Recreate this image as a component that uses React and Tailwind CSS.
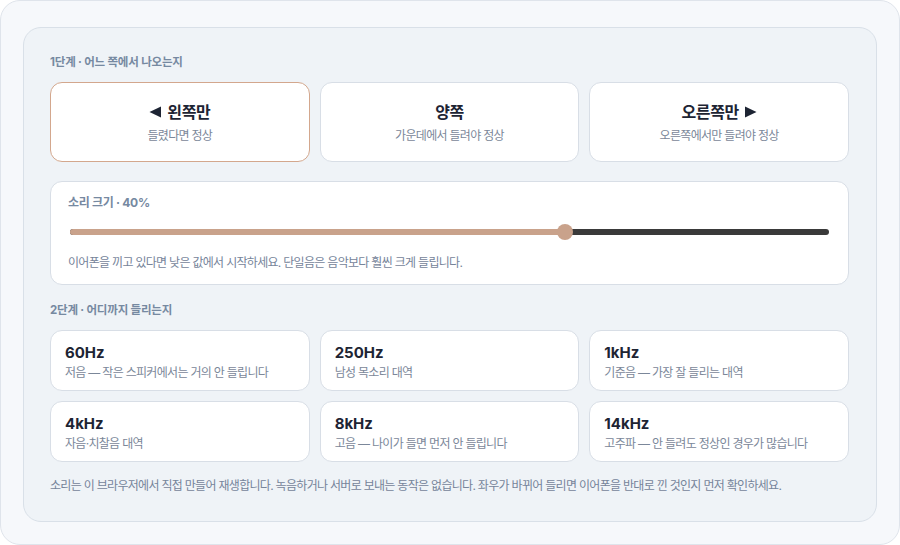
import React from "react";

const sides = [
  { title: "왼쪽만", arrow: "left", sub: "들렸다면 정상", active: true },
  { title: "양쪽", sub: "가운데에서 들려야 정상" },
  { title: "오른쪽만", arrow: "right", sub: "오른쪽에서만 들려야 정상" },
];

const bands = [
  { hz: "60Hz", sub: "저음 — 작은 스피커에서는 거의 안 들립니다" },
  { hz: "250Hz", sub: "남성 목소리 대역" },
  { hz: "1kHz", sub: "기준음 — 가장 잘 들리는 대역" },
  { hz: "4kHz", sub: "자음·치찰음 대역" },
  { hz: "8kHz", sub: "고음 — 나이가 들면 먼저 안 들립니다" },
  { hz: "14kHz", sub: "고주파 — 안 들려도 정상인 경우가 많습니다" },
];

const font = { fontFamily: 'Inter, "Noto Sans CJK KR", sans-serif' };

function Arrow({ dir }) {
  return (
    <svg width="12" height="12" viewBox="0 0 12 12" className="shrink-0">
      {dir === "left" ? (
        <path d="M12 0.5 L12 11.5 L0.5 6 Z" fill="#1d2433" />
      ) : (
        <path d="M0 0.5 L0 11.5 L11.5 6 Z" fill="#1d2433" />
      )}
    </svg>
  );
}

export default function App() {
  const pos = 65.2;
  return (
    <div
      className="w-[900px] h-[545px] rounded-[20px] border border-[#dfe4eb] bg-[#f6f8fb] px-[22px] pt-[26px]"
      style={font}
    >
      <div className="h-[495px] rounded-[18px] border border-[#d9e0e8] bg-[#eff3f7] pl-[26px] pr-[27px] pt-[26px]">
        <div className="text-[11.5px] leading-[16px] font-bold tracking-[-0.2px] text-[#7689a1]">1단계 · 어느 쪽에서 나오는지</div>

        <div className="mt-[12px] grid grid-cols-3 gap-[10px]">
          {sides.map((s) => (
            <div
              key={s.title}
              className={
                s.active
                  ? "h-[80px] rounded-[12px] border border-[#d3a78d] bg-white flex flex-col items-center justify-center"
                  : "h-[80px] rounded-[12px] border border-[#d8dee6] bg-white flex flex-col items-center justify-center"
              }
            >
              <div className="flex items-center gap-[6px] text-[16px] leading-[22px] font-bold tracking-[-0.4px] text-[#1d2433]">
                {s.arrow === "left" && <Arrow dir="left" />}
                <span>{s.title}</span>
                {s.arrow === "right" && <Arrow dir="right" />}
              </div>
              <div className="mt-[5px] text-[12px] leading-[16px] tracking-[-0.7px] text-[#7b8799]">{s.sub}</div>
            </div>
          ))}
        </div>

        <div className="mt-[19px] h-[104px] rounded-[12px] border border-[#d8dee6] bg-white pl-[17px] pr-[19px] pt-[13px]">
          <div className="text-[12px] leading-[16px] font-bold tracking-[-0.3px] text-[#7689a1]">소리 크기 · 40%</div>
          <div className="relative ml-[2px] mt-[17px] h-[8px] flex items-center">
            <div className="h-[6px] w-full rounded-full bg-[#3a3a3a]" />
            <div
              className="absolute left-0 top-[1px] h-[6px] rounded-full bg-[#c9a28b]"
              style={{ width: pos + "%" }}
            />
            <div
              className="absolute top-[-4px] h-[16px] w-[16px] -ml-[8px] rounded-full bg-[#c9a28b]"
              style={{ left: pos + "%" }}
            />
          </div>
          <div className="mt-[19px] text-[12px] leading-[16px] tracking-[-0.7px] text-[#76849a]">
            이어폰을 끼고 있다면 낮은 값에서 시작하세요. 단일음은 음악보다 훨씬 크게 들립니다.
          </div>
        </div>

        <div className="mt-[17px] text-[11.5px] leading-[16px] font-bold tracking-[-0.2px] text-[#7689a1]">2단계 · 어디까지 들리는지</div>

        <div className="mt-[12px] grid grid-cols-3 gap-[10px]">
          {bands.map((b) => (
            <div
              key={b.hz}
              className="h-[61px] rounded-[12px] border border-[#d8dee6] bg-white px-[14px] pt-[12px]"
            >
              <div className="text-[15px] leading-[20px] font-bold text-[#1d2433]">{b.hz}</div>
              <div className="mt-[2px] text-[12px] leading-[16px] tracking-[-0.7px] text-[#7b8799]">{b.sub}</div>
            </div>
          ))}
        </div>

        <div className="mt-[16px] text-[12px] leading-[16px] tracking-[-0.7px] text-[#76849a]">
          소리는 이 브라우저에서 직접 만들어 재생합니다. 녹음하거나 서버로 보내는 동작은 없습니다. 좌우가 바뀌어 들리면 이어폰을 반대로 낀 것인지 먼저 확인하세요.
        </div>
      </div>
    </div>
  );
}
